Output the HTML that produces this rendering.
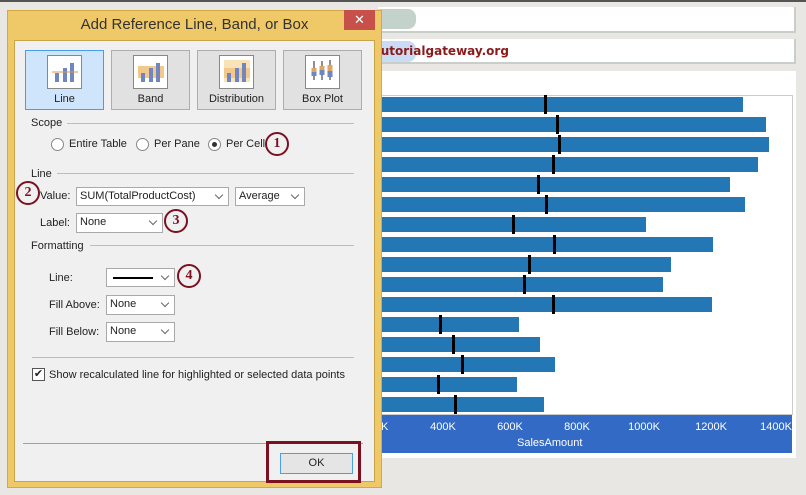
<!DOCTYPE html>
<html><head><meta charset="utf-8"><style>
*{margin:0;padding:0;box-sizing:border-box}
body{width:806px;height:495px;background:#e8e7e4;position:relative;overflow:hidden;font-family:"Liberation Sans",sans-serif;font-size:11px;color:#222}
.a{position:absolute}
.bar{position:absolute;left:380px;height:15px;background:#2277b4}
.mk{position:absolute;width:3px;height:19px;background:#000}
.sel{position:absolute;background:#fff;border:1px solid #a9a9a9;font-size:11px;line-height:16px;padding-left:3px}
.sel:after{content:"";position:absolute;right:6px;top:4px;width:5px;height:5px;border-right:1.5px solid #666;border-bottom:1.5px solid #666;transform:rotate(45deg)}
.num{position:absolute;width:24px;height:24px;border:2.5px solid #7a1020;border-radius:50%;color:#7a1020;font-weight:bold;font-family:"Liberation Serif",serif;font-size:14px;text-align:center;line-height:19px}
.hdr{position:absolute;font-size:11px}
.hl{position:absolute;height:1px;background:#bdbdbd}
.rad{position:absolute;width:13px;height:13px;border:1px solid #888;border-radius:50%;background:#fff}
.tb{position:absolute;top:50px;width:79px;height:60px;background:#e1e1e1;border:1px solid #adadad;text-align:center}
.tb .ic{position:absolute;left:21px;top:4px;width:35px;height:34px;background:#fff;border:1px solid #888}
.tb span{position:absolute;left:0;right:0;top:42px;font-size:11px}
.tk{position:absolute;top:421px;color:#fff;font-size:11px;width:40px;text-align:center}
</style></head><body>
<div class="a" style="left:0;top:0;width:806px;height:2px;background:#555"></div>
<div class="a" style="left:378px;top:7px;width:418px;height:26px;background:#fff;border-bottom:2px solid #c8cfc9;border-right:2px solid #c8cfc9"></div>
<div class="a" style="left:372px;top:9px;width:44px;height:20px;background:#c3d3cb;border-radius:8px"></div>
<div class="a" style="left:378px;top:39px;width:418px;height:25px;background:#fff;border-bottom:2px solid #c8cfc9;border-right:2px solid #c8cfc9"></div>
<div class="a" style="left:372px;top:41px;width:44px;height:21px;background:#c9dcf3;border-radius:8px"></div>
<div class="a" style="left:363px;top:44px;color:#8b1a1a;font-weight:bold;font-size:12px;font-family:'DejaVu Sans',sans-serif">©tutorialgateway.org</div>
<div class="a" style="left:378px;top:71px;width:418px;height:387px;background:#fff"></div>
<div class="a" style="left:378px;top:95px;width:415px;height:320px;border:1px solid #ccc;border-left:none"></div>
<div class="bar" style="top:97px;width:363px"></div><div class="mk" style="left:544px;top:95px"></div>
<div class="bar" style="top:117px;width:386px"></div><div class="mk" style="left:556px;top:115px"></div>
<div class="bar" style="top:137px;width:389px"></div><div class="mk" style="left:558px;top:135px"></div>
<div class="bar" style="top:157px;width:378px"></div><div class="mk" style="left:552px;top:155px"></div>
<div class="bar" style="top:177px;width:350px"></div><div class="mk" style="left:537px;top:175px"></div>
<div class="bar" style="top:197px;width:365px"></div><div class="mk" style="left:545px;top:195px"></div>
<div class="bar" style="top:217px;width:266px"></div><div class="mk" style="left:512px;top:215px"></div>
<div class="bar" style="top:237px;width:333px"></div><div class="mk" style="left:553px;top:235px"></div>
<div class="bar" style="top:257px;width:291px"></div><div class="mk" style="left:528px;top:255px"></div>
<div class="bar" style="top:277px;width:283px"></div><div class="mk" style="left:523px;top:275px"></div>
<div class="bar" style="top:297px;width:332px"></div><div class="mk" style="left:552px;top:295px"></div>
<div class="bar" style="top:317px;width:139px"></div><div class="mk" style="left:439px;top:315px"></div>
<div class="bar" style="top:337px;width:160px"></div><div class="mk" style="left:452px;top:335px"></div>
<div class="bar" style="top:357px;width:175px"></div><div class="mk" style="left:461px;top:355px"></div>
<div class="bar" style="top:377px;width:137px"></div><div class="mk" style="left:437px;top:375px"></div>
<div class="bar" style="top:397px;width:164px"></div><div class="mk" style="left:454px;top:395px"></div>
<div class="a" style="left:378px;top:415px;width:414px;height:38px;background:#336ac6"></div>
<div class="a" style="left:381px;top:421px;color:#fff;font-size:11px">K</div>
<div class="tk" style="left:423px">400K</div><div class="tk" style="left:490px">600K</div><div class="tk" style="left:557px">800K</div><div class="tk" style="left:624px">1000K</div><div class="tk" style="left:691px">1200K</div><div class="tk" style="left:756px">1400K</div>
<div class="a" style="left:517px;top:437px;color:#fff;font-size:11px">SalesAmount</div>

<!-- dialog -->
<div class="a" style="left:7px;top:10px;width:375px;height:478px;background:#efc867;border:1px solid #d5a845"></div>
<div class="a" style="left:14px;top:40px;width:361px;height:442px;background:#f0f0f0;border:1px solid #c9a54a"></div>
<div class="a" style="left:0;top:16px;width:389px;text-align:center;font-size:15px;color:#333">Add Reference Line, Band, or Box</div>
<div class="a" style="left:344px;top:10px;width:31px;height:20px;background:#c7504a;color:#fff;text-align:center;font-size:13px;line-height:19px">✕</div>

<div class="tb" style="left:25px;background:#cfe5fb;border-color:#4a9be8"><div class="ic"><svg width="33" height="32"><rect x="7" y="17" width="4" height="9" fill="#6f86c0"/><rect x="15" y="12" width="4" height="14" fill="#6f86c0"/><rect x="22" y="7" width="4" height="19" fill="#6f86c0"/><line x1="4" y1="16" x2="30" y2="16" stroke="#d99a4a" stroke-width="1"/></svg></div><span>Line</span></div>
<div class="tb" style="left:111px"><div class="ic"><svg width="33" height="32"><rect x="4" y="10" width="26" height="12" fill="#f3c98b"/><rect x="7" y="17" width="4" height="9" fill="#6f86c0"/><rect x="15" y="12" width="4" height="14" fill="#6f86c0"/><rect x="22" y="7" width="4" height="19" fill="#6f86c0"/></svg></div><span>Band</span></div>
<div class="tb" style="left:197px"><div class="ic"><svg width="33" height="32"><rect x="4" y="4" width="26" height="22" fill="#f8e2b8"/><rect x="4" y="12" width="26" height="10" fill="#f3c98b"/><rect x="7" y="17" width="4" height="9" fill="#6f86c0"/><rect x="15" y="12" width="4" height="14" fill="#6f86c0"/><rect x="22" y="7" width="4" height="19" fill="#6f86c0"/></svg></div><span>Distribution</span></div>
<div class="tb" style="left:283px"><div class="ic"><svg width="33" height="32" stroke="#222" stroke-width="1"><line x1="8" y1="5" x2="8" y2="24"/><line x1="16" y1="5" x2="16" y2="24"/><line x1="24" y1="4" x2="24" y2="24"/><rect x="5.5" y="12" width="5" height="8" fill="#6f86c0" stroke="none"/><rect x="5.5" y="12" width="5" height="4" fill="#e0a560" stroke="none"/><rect x="13.5" y="10" width="5" height="9" fill="#6f86c0" stroke="none"/><rect x="13.5" y="10" width="5" height="4" fill="#e0a560" stroke="none"/><rect x="21.5" y="9" width="5" height="12" fill="#6f86c0" stroke="none"/><rect x="21.5" y="9" width="5" height="6" fill="#e0a560" stroke="none"/></svg></div><span>Box Plot</span></div>

<div class="hdr" style="left:31px;top:117px">Scope</div><div class="hl" style="left:67px;top:123px;width:287px"></div>
<div class="rad" style="left:51px;top:138px"></div><div class="a" style="left:69px;top:138px">Entire Table</div>
<div class="rad" style="left:136px;top:138px"></div><div class="a" style="left:154px;top:138px">Per Pane</div>
<div class="rad" style="left:208px;top:138px"></div><div class="a" style="left:212px;top:142px;width:5px;height:5px;border-radius:50%;background:#333"></div><div class="a" style="left:226px;top:138px">Per Cell</div>
<div class="num" style="left:265px;top:132px">1</div>

<div class="hdr" style="left:31px;top:168px">Line</div><div class="hl" style="left:57px;top:173px;width:297px"></div>
<div class="a" style="left:40px;top:190px">Value:</div>
<div class="sel" style="left:76px;top:187px;width:153px;height:19px">SUM(TotalProductCost)</div>
<div class="sel" style="left:235px;top:187px;width:70px;height:19px">Average</div>
<div class="num" style="left:16px;top:181px">2</div>
<div class="a" style="left:40px;top:217px">Label:</div>
<div class="sel" style="left:76px;top:213px;width:87px;height:20px">None</div>
<div class="num" style="left:164px;top:209px">3</div>

<div class="hdr" style="left:31px;top:240px">Formatting</div><div class="hl" style="left:90px;top:245px;width:264px"></div>
<div class="a" style="left:49px;top:272px">Line:</div>
<div class="sel" style="left:106px;top:268px;width:69px;height:19px"><div style="position:absolute;left:6px;top:8px;width:40px;height:2px;background:#000"></div></div>
<div class="num" style="left:177px;top:264px">4</div>
<div class="a" style="left:49px;top:299px">Fill Above:</div>
<div class="sel" style="left:106px;top:295px;width:69px;height:20px">None</div>
<div class="a" style="left:49px;top:326px">Fill Below:</div>
<div class="sel" style="left:106px;top:322px;width:69px;height:20px">None</div>

<div class="hl" style="left:32px;top:357px;width:322px"></div>
<div class="a" style="left:32px;top:368px;width:13px;height:13px;border:1px solid #555;background:#fff;font-size:11px;line-height:11px;text-align:center">✔</div>
<div class="a" style="left:49px;top:369px">Show recalculated line for highlighted or selected data points</div>

<div class="hl" style="left:23px;top:443px;width:340px;background:#a0a0a0"></div>
<div class="a" style="left:280px;top:453px;width:73px;height:21px;background:#e5e5e5;border:1px solid #4aa0e8;text-align:center;line-height:19px">OK</div>
<div class="a" style="left:266px;top:441px;width:95px;height:42px;border:3px solid #7a1020"></div>
</body></html>
